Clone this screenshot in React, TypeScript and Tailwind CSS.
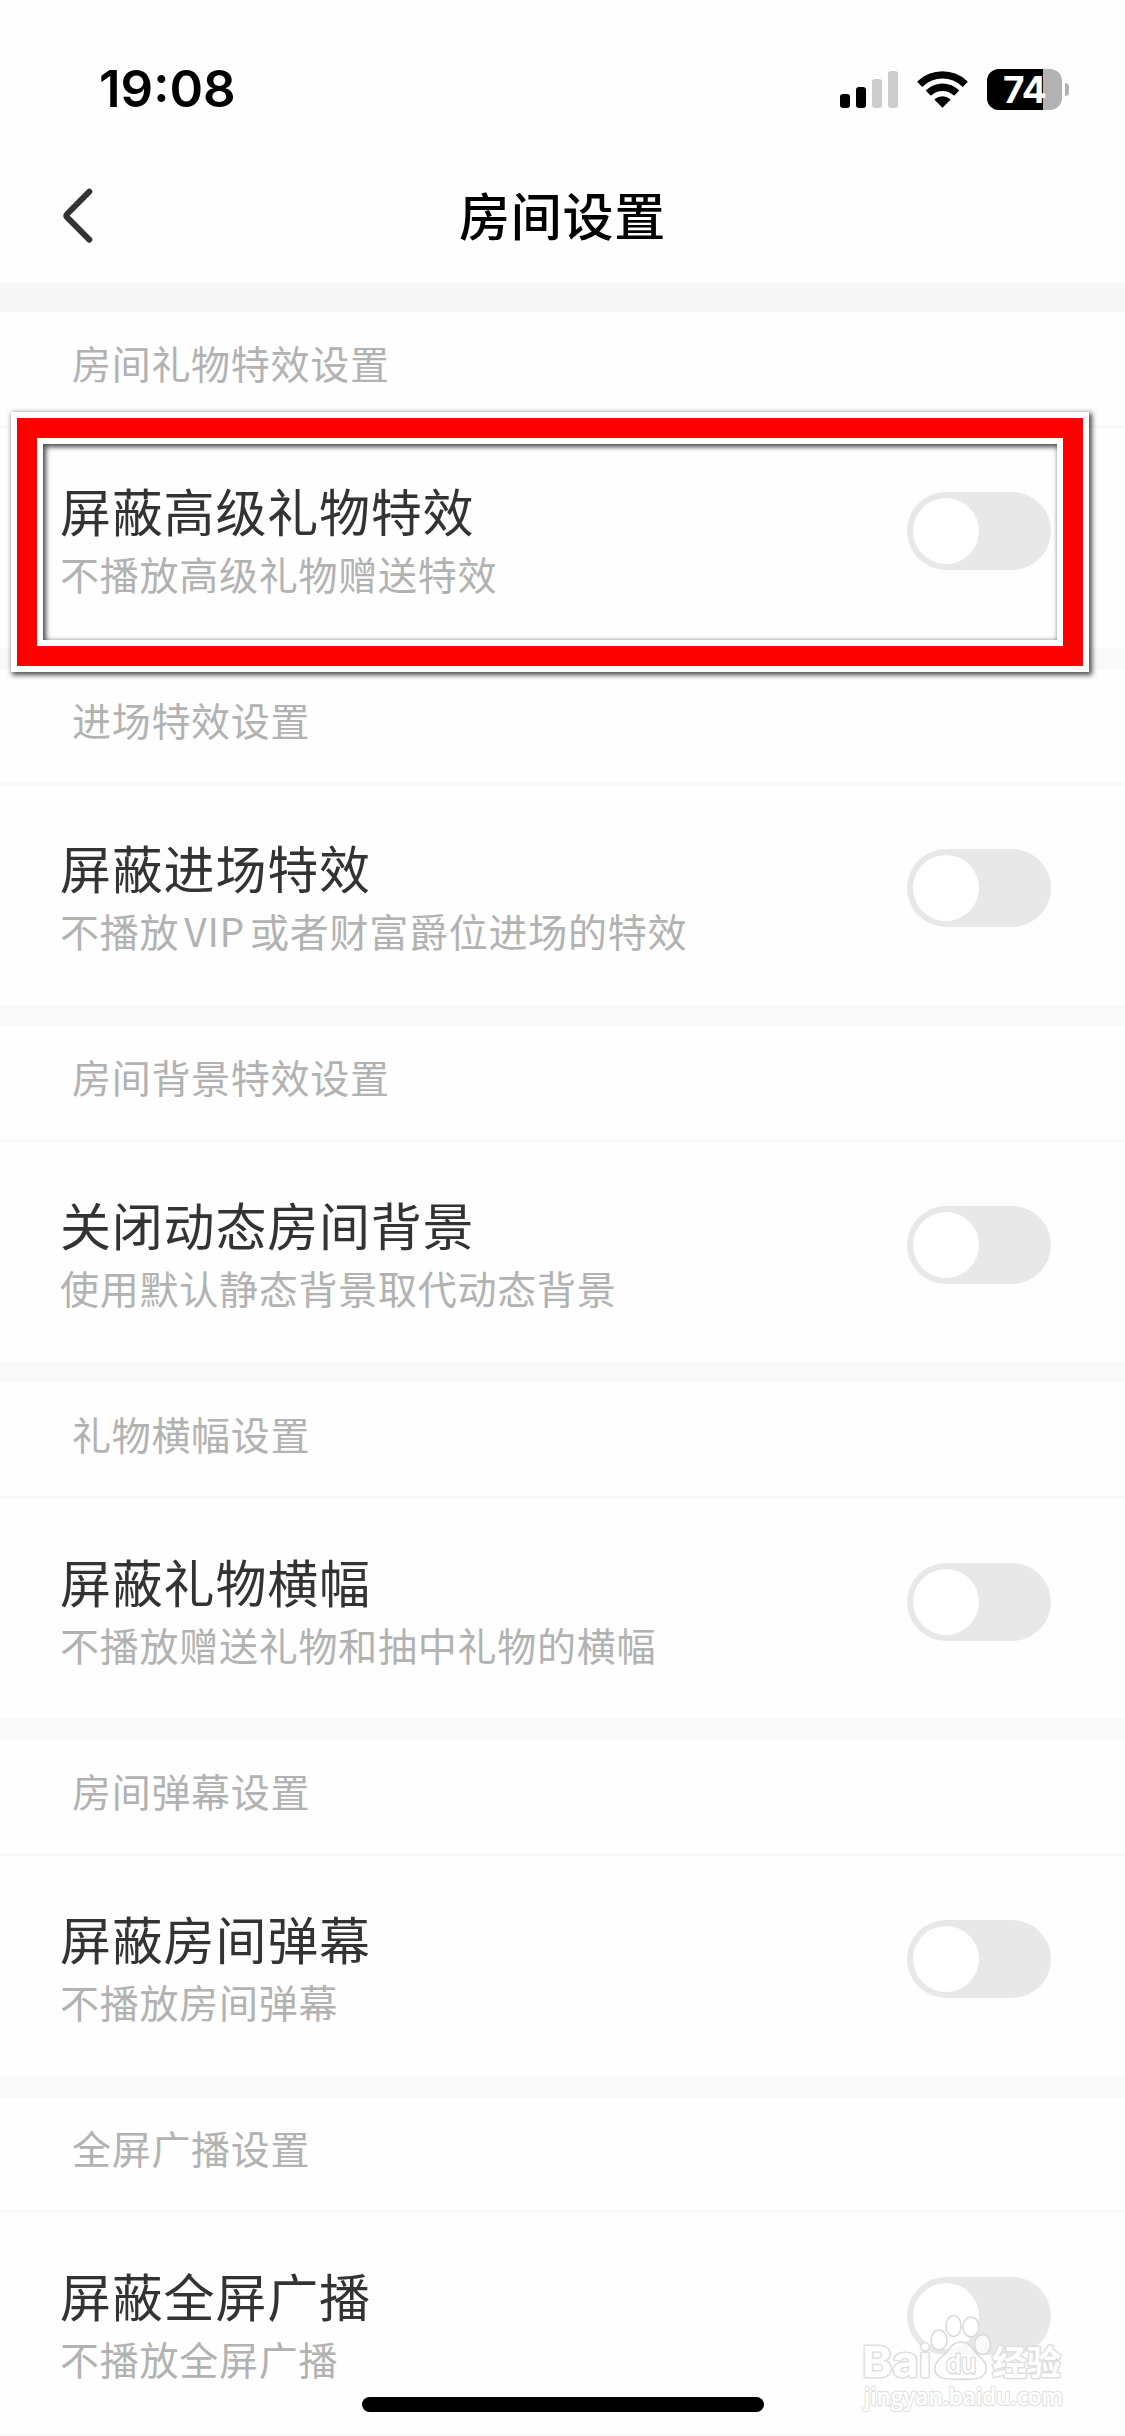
import { Switch } from "@headlessui/react";
import { useState, type ReactNode } from "react";

const sections = [
    {
        header: "房间礼物特效设置",
        title: "屏蔽高级礼物特效",
        desc: "不播放高级礼物赠送特效",
        highlighted: true,
    },
    {
        header: "进场特效设置",
        title: "屏蔽进场特效",
        desc: <>不播放<span className="mx-[5px]">VIP</span>或者财富爵位进场的特效</>,
    },
    {
        header: "房间背景特效设置",
        title: "关闭动态房间背景",
        desc: "使用默认静态背景取代动态背景",
    },
    {
        header: "礼物横幅设置",
        title: "屏蔽礼物横幅",
        desc: "不播放赠送礼物和抽中礼物的横幅",
    },
    {
        header: "房间弹幕设置",
        title: "屏蔽房间弹幕",
        desc: "不播放房间弹幕",
    },
    {
        header: "全屏广播设置",
        title: "屏蔽全屏广播",
        desc: "不播放全屏广播",
    },
];

function StatusBar() {
    return (
        <div className="flex h-[150px] items-start justify-between pl-[99px] pr-[56px] pt-[60px]">

            <span className="font-['Inter'] text-[51px] leading-[58px] font-semibold text-black">
                19:08
            </span>

            <div className="flex h-[58px] items-center">

                <svg width="58" height="37" viewBox="0 0 58 37">
                    <rect x="0" y="23" width="10" height="14" rx="3" fill="#000" />
                    <rect x="16" y="16" width="10" height="21" rx="3" fill="#000" />
                    <rect x="32" y="8" width="10" height="29" rx="3" fill="#ccc" />
                    <rect x="48" y="0" width="10" height="37" rx="3" fill="#ccc" />
                </svg>

                <svg className="ml-[19px]" width="51" height="37" viewBox="0 0 51 37">
                    <path d="M0.6 10.2 A36 36 0 0 1 50.4 10.2 Q50.9 10.8 50.4 11.3 L46.2 15.4 Q45.7 15.9 45.1 15.4 A28.5 28.5 0 0 0 5.9 15.4 Q5.3 15.9 4.8 15.4 L0.6 11.3 Q0.1 10.8 0.6 10.2Z" />
                    <path d="M9.2 19 A23.8 23.8 0 0 1 41.8 19 Q42.3 19.6 41.8 20.1 L37.6 24.2 Q37.1 24.7 36.5 24.2 A16.2 16.2 0 0 0 14.5 24.2 Q13.9 24.7 13.4 24.2 L9.2 20.1 Q8.7 19.6 9.2 19Z" />
                    <path d="M17.9 28 A11.8 11.8 0 0 1 33.1 28 Q33.8 28.5 33.2 29.1 L26.1 36.2 Q25.5 36.8 24.9 36.2 L17.8 29.1 Q17.2 28.5 17.9 28Z" />
                </svg>

                <div className="ml-[19px] flex items-center">
                    <div className="relative h-[41px] w-[75px] rounded-[12px] bg-[#b2b2b2]">
                        <div className="h-full w-[56px] rounded-l-[12px] bg-black" />
                        <span className="absolute inset-0 flex items-center justify-center font-['Inter'] text-[37px] leading-[41px] font-bold tracking-[-0.7px] text-white">
                            74
                        </span>
                    </div>
                    <div className="ml-[3px] h-[13px] w-[4px] rounded-r-full bg-[#b2b2b2]" />
                </div>

            </div>

        </div>
    );
}

function NavBar() {
    return (
        <div className="grid h-[133px] grid-cols-[1fr_auto_1fr] items-center pl-[60px] pr-[60px]">

            <button className="w-[36px]">
                <svg width="36" height="60" viewBox="0 0 36 60" fill="none">
                    <path
                        d="M29.3 4.7 L7.2 27 Q5.6 28.7 7.2 30.4 L29.3 52.7"
                        stroke="#333"
                        strokeWidth="6"
                        strokeLinecap="round"
                    />
                </svg>
            </button>

            <h1 className="-mt-[6px] text-[51px] leading-[72px] font-medium tracking-[0.7px] text-black">
                房间设置
            </h1>

        </div>
    );
}

function Highlight() {
    return (
        <div className="pointer-events-none absolute -top-[16px] left-[11px] h-[260px] w-[1078px] border-[6px] border-white shadow-[2px_2px_5px_1px_rgba(0,0,0,0.7)]">
            <div className="h-full border-[20px] border-[#ff0000]">
                <div className="h-full border-[6px] border-white">
                    <div className="h-full shadow-[inset_2px_2px_5px_1px_rgba(0,0,0,0.7)]" />
                </div>
            </div>
        </div>
    );
}

function SettingSection({ header, title, desc, highlighted }: {
    header: string;
    title: string;
    desc: ReactNode;
    highlighted?: boolean;
}) {
    const [enabled, setEnabled] = useState(false);

    return (
        <section className="h-[357px] border-b-[21px] border-[#f9f9f9] bg-[#fefefe]">

            <h2 className="h-[113px] pl-[72px] pt-[21px] text-[39px] leading-[58px] tracking-[0.7px] text-[#b2b2b2]">
                {header}
            </h2>

            <div className="relative flex h-[223px] justify-between border-t-[3px] border-[#f9f9f9] pl-[60px] pr-[74px]">

                <div className="pt-[46px]">
                    <p className="text-[51px] leading-[72px] tracking-[0.8px] text-[#333]">
                        {title}
                    </p>
                    <p className="-mt-[2px] text-[39px] leading-[58px] tracking-[0.75px] text-[#b2b2b2]">
                        {desc}
                    </p>
                </div>

                <Switch
                    checked={enabled}
                    onChange={setEnabled}
                    className="mt-[64px] h-[78px] w-[144px] rounded-full bg-[#e8e8e8] p-[6px] data-checked:bg-green-500"
                >
                    <span className={`block size-[66px] rounded-full bg-white ${enabled ? "translate-x-[66px]" : ""}`} />
                </Switch>

                {highlighted && <Highlight />}

            </div>

        </section>
    );
}

function Watermark() {
    return (
        <svg
            className="absolute right-[56px] bottom-[16px] overflow-visible"
            width="212"
            height="110"
            viewBox="0 0 212 110"
            fill="#fff"
            stroke="#d9d9d9"
            strokeWidth="1.5"
            strokeLinejoin="round"
        >
            <g fillOpacity="0.75">
                <ellipse cx="82" cy="30" rx="8" ry="10" />
                <ellipse cx="96.5" cy="16" rx="7.5" ry="10.5" />
                <ellipse cx="114" cy="17" rx="8" ry="10" />
                <ellipse cx="125.5" cy="34.5" rx="8" ry="10" />
                <path d="M104 32 C113 32 115 39 121 45 C127 50 130 54 129 60 C128 68 121 70 104 69 C87 70 79 68 78 60 C77 54 81 50 87 45 C93 39 95 32 104 32Z" />
            </g>
            <g paintOrder="stroke" strokeWidth="3" stroke="#dedede">
                <text x="5" y="67" fontFamily="Inter" fontWeight="700" fontSize="43" textLength="69" lengthAdjust="spacingAndGlyphs">Bai</text>
                <text x="89" y="63" fontFamily="Inter" fontWeight="500" fontSize="26" textLength="30" lengthAdjust="spacingAndGlyphs">du</text>
                <text x="135" y="65" fontFamily="Noto Sans CJK SC" fontWeight="700" fontSize="34" textLength="69" lengthAdjust="spacingAndGlyphs">经验</text>
                <text x="7" y="95" fontFamily="Open Sans" fontWeight="600" fontSize="24" strokeWidth="2.4" stroke="#e3e3e3" textLength="199" lengthAdjust="spacingAndGlyphs">jingyan.baidu.com</text>
            </g>
        </svg>
    );
}

export default function App() {
    return (
        <div className="relative h-[2436px] w-[1125px] overflow-hidden bg-[#fefefe] font-['Noto_Sans_CJK_SC',sans-serif]">

            <StatusBar />

            <NavBar />

            <main className="border-t-[29px] border-[#f7f7f7]">
                {sections.map((section) => (
                    <SettingSection key={section.title} {...section} />
                ))}
            </main>

            <Watermark />

            <div className="absolute bottom-[24px] left-[362px] h-[15px] w-[402px] rounded-full bg-black" />

        </div>
    );
}
